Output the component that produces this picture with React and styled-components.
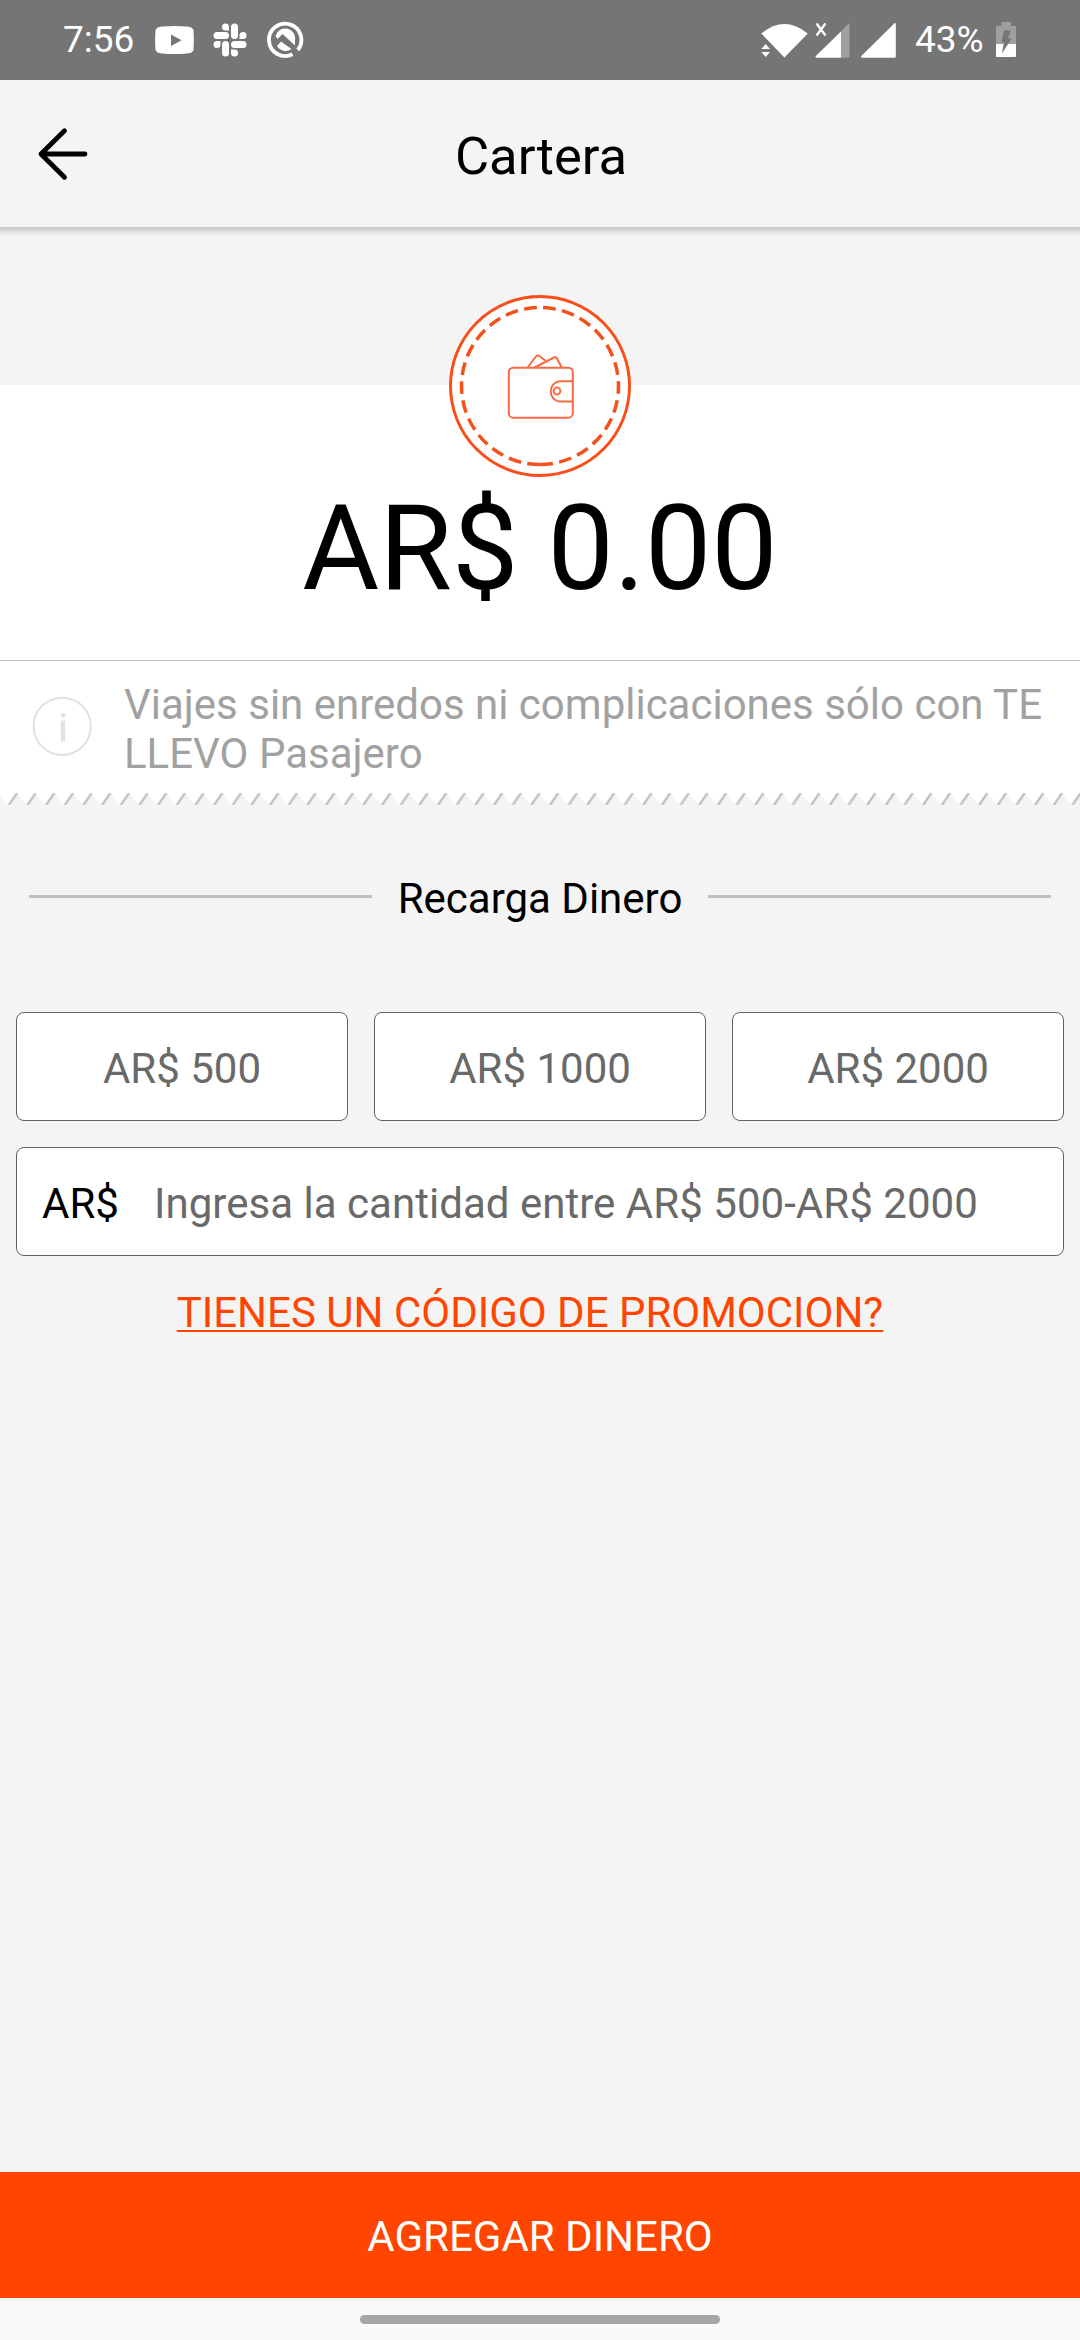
import React from 'react';
import styled, {createGlobalStyle} from 'styled-components';

const accentColor = '#ff4500';
const greyBackground = '#f4f4f4';
const lineColor = '#bfbfbf';

const GlobalStyle = createGlobalStyle`
    * {
        box-sizing: border-box;
    }
    body {
        margin: 0;
        font-family: Roboto, "Liberation Sans", sans-serif;
        font-size: 42px;
        line-height: 49px;
    }
`;

const Screen = styled.div`
    display: flex;
    flex-direction: column;
    width: 1080px;
    height: 2340px;
    overflow: hidden;
    background-color: ${greyBackground};
`;

const StatusBar = styled.div`
    display: flex;
    align-items: center;
    justify-content: space-between;
    height: 80px;
    padding: 0 64px 0 63px;
    background-color: #757575;
    color: #fff;
    font-size: 37px;
    line-height: 44px;
    svg {
        display: block;
    }
`;

const StatusGroup = styled.div`
    display: flex;
    align-items: center;
`;

const StatusText = styled.span`
    width: ${({$width}) => $width}px;
    margin: 0 ${({$right}) => $right}px 0 ${({$left}) => $left || 0}px;
    white-space: nowrap;
`;

const Header = styled.header`
    display: grid;
    grid-template-columns: 140px 1fr 140px;
    align-items: center;
    height: 147px;
    flex-shrink: 0;
    h1 {
        margin: 4px 0 0 2px;
        text-align: center;
        font-size: 52.500px;
        font-weight: 400;
        line-height: 62px;
    }
`;

const HeaderShadow = styled.div`
    height: 9px;
    flex-shrink: 0;
    background: linear-gradient(#c6c6c6, #d6d6d6 35%, #e8e8e8 65%, ${greyBackground});
`;

const BackButton = styled.button`
    display: flex;
    width: 60px;
    height: 60px;
    margin-left: 34px;
    padding: 0;
    border: 0;
    background: none;
`;

const Balance = styled.section`
    display: flex;
    flex-direction: column;
    align-items: center;
    height: 276px;
    margin-top: 149px;
    border-bottom: 1px solid ${lineColor};
    background-color: #fff;
    svg {
        display: block;
        margin-top: -91px;
        flex-shrink: 0;
    }
`;

const Amount = styled.div`
    margin-top: 2px;
    font-size: 118px;
    line-height: 138px;
    white-space: nowrap;
`;

const Info = styled.section`
    display: flex;
    height: 132px;
    padding: 19px 0 0 32px;
    background-color: #fff;
    color: #a1a1a1;
    svg {
        margin: 16px 32px 0 0;
        flex-shrink: 0;
    }
    p {
        margin: 0;
        white-space: nowrap;
    }
`;

const TornEdge = styled.svg`
    display: block;
    flex-shrink: 0;
`;

const SectionTitle = styled.div`
    display: flex;
    align-items: center;
    gap: 26px;
    margin: 69px 29px 0;
    &::before, &::after {
        content: '';
        flex: 1;
        height: 3px;
        margin-bottom: 4px;
        background-color: ${lineColor};
    }
    h2 {
        margin: 0;
        font-size: 42px;
        font-weight: 400;
    }
`;

const Form = styled.div`
    display: flex;
    flex-direction: column;
    flex: 1;
    align-items: center;
    padding: 89px 16px 0;
`;

const Options = styled.div`
    display: grid;
    grid-template-columns: repeat(3, 1fr);
    gap: 26px;
    width: 100%;
`;

const Option = styled.button`
    height: 109px;
    padding: 4px 0 0;
    border: 1px solid #626262;
    border-radius: 8px;
    background-color: #fff;
    color: #696969;
    font: inherit;
`;

const AmountField = styled.div`
    display: flex;
    align-items: center;
    width: 100%;
    height: 109px;
    margin-top: 26px;
    padding: 3px 25px 0;
    border: 1px solid #626262;
    border-radius: 8px;
    background-color: #fff;
    white-space: nowrap;
`;

const Currency = styled.span`
    width: 112px;
`;

const Hint = styled.span`
    color: #696969;
    letter-spacing: .03px;
`;

const PromoLink = styled.a`
    margin: 32px 20px 0 0;
    color: ${accentColor};
    text-decoration: underline;
    text-decoration-thickness: 2px;
    text-decoration-skip-ink: none;
    text-underline-offset: 3px;
    white-space: nowrap;
`;

const AddButton = styled.button`
    height: 126px;
    flex-shrink: 0;
    padding: 3px 0 0;
    border: 0;
    background-color: ${accentColor};
    color: #fff;
    font: inherit;
`;

const NavBar = styled.div`
    display: flex;
    justify-content: center;
    height: 42px;
    flex-shrink: 0;
    padding-top: 17px;
    background-color: #fafafa;
    &::after {
        content: '';
        width: 360px;
        height: 9px;
        border-radius: 5px;
        background-color: #a6a6a6;
    }
`;


const NotificationIcons = () => (
    <svg width="150" height="40" viewBox="154 20 150 40" fill="#fff">
        <path d="M162 26.5q12.500-1 25 0q6 .5 6.500 4q.7 9.500 0 19q-.5 3.500-6.500 4q-12.500 1-25 0q-6-.5-6.500-4q-.9-9.500 0-19q.5-3.500 6.500-4z" />
        <path d="M171 34.500v11.500l10.500-5.700z" fill="#757575" />
        {/* slack */}
        <rect x="231" y="23.500" width="7" height="15.500" rx="3.500" />
        <rect x="213.500" y="32" width="15.500" height="7" rx="3.500" />
        <rect x="222" y="41" width="7" height="15.500" rx="3.500" />
        <rect x="231" y="41" width="15.500" height="7" rx="3.500" />
        <path d="M229 30.500h-3.500a3.500 3.500 0 1 1 3.500-3.500z" />
        <path d="M239.500 39v-3.500a3.500 3.500 0 1 1 3.500 3.500z" />
        <path d="M220.500 41v3.500a3.500 3.500 0 1 1-3.500-3.500z" />
        <path d="M231 49.500h3.500a3.500 3.500 0 1 1-3.500 3.500z" />
        {/* android 10 */}
        <path d="M292.500 54.300A16.200 16.200 0 1 1 297.800 50" fill="none" stroke="#fff" strokeWidth="3.800" />
        <path d="M275.500 36a10 10 0 0 1 19.500 5v4.500l-12.500-11.500-5 5z" />
        <path d="M277 46l4-4.500 10.500 7.500a10 10 0 0 1-14.500-3z" />
    </svg>
);

const SignalIcons = () => (
    <svg width="136" height="40" viewBox="760 20 136 40" fill="#fff">
        <path d="M760.300 33.500q23-19 46.500 0l-23.400 24z" />
        <path d="M760.300 49l4.400-5 4.300 5zM760.300 52l4.400 5 4.300-5z" />
        <path d="M815.500 23.500l9 12M824.500 23.500l-9 12" fill="none" stroke="#fff" strokeWidth="2.300" />
        <path d="M840 31.500l7.500-8q1-.5 1 .5v32.500q0 1.300-1.300 1.300h-7.200z" fill="#9f9f9f" />
        <path d="M840 31.500v26.300h-24.500q-2-.5-.7-1.800z" />
        <path d="M894.800 24v32.500q0 1.300-1.300 1.300h-32.500q-2-.5-.7-1.800l33-32.500q1.500-1 1.500.5z" />
    </svg>
);

const BatteryIcon = () => (
    <svg width="20" height="36" viewBox="995 22 20 36">
        <path d="M1000.500 22h9.500v4h5v18h-20v-18h5.500z" fill="#9f9f9f" />
        <path d="M995 44h20v12q0 1-1 1h-18q-1 0-1-1z" fill="#fff" />
        <path d="M1003 30.500h6.500l-2.500 8h3.500l-9.500 15 2-11.500h-2.500z" fill="#757575" />
    </svg>
);

const BackIcon = () => (
    <svg width="60" height="60" fill="none" stroke="#000" strokeWidth="4.800" strokeLinecap="round" strokeLinejoin="round">
        <path d="M30.500 6.700L7 30l23.500 23.300M7 30h44" />
    </svg>
);

const WalletIcon = () => (
    <svg width="184" height="184" viewBox="-92 -92 184 184" fill="none" stroke={accentColor}>
        <circle r="89.500" fill="#fff" stroke="#fa4f1a" strokeWidth="3" />
        <circle r="78.500" stroke="#f5501a" strokeWidth="3.500" strokeDasharray="12.75 6.430" transform="rotate(90)" />
        <g stroke="#f96a42" strokeWidth="2">
            <rect x="-31.200" y="-18.300" width="64" height="50" rx="4.500" />
            <path d="M-12.500-18.500l8.500-11q1.500-2 3.300-.5l6 4.500M-5.500-18.500l19.500-10q2-1 2.700.5l5 9.500" />
            <path d="M32.800-4.700h-13.500a10 10.200 0 0 0 0 20.200h13.500" />
            <circle cx="17" cy="5" r="3.400" />
        </g>
    </svg>
);

const InfoIcon = () => (
    <svg width="60" height="60" fill="none" stroke="#e2e2e2">
        <circle cx="30.200" cy="30.300" r="28.600" strokeWidth="2" />
        <path d="M31 24.500v21" strokeWidth="4.500" />
        <circle cx="31.200" cy="19.300" r="2.400" fill="#e2e2e2" stroke="none" />
    </svg>
);

const Edge = () => (
    <TornEdge width="1080" height="12">
        <defs>
            <pattern id="tooth" x="7.800" width="18.660" height="12" patternUnits="userSpaceOnUse">
                <rect width="18.660" height="12" fill="#fff" />
                <path d="M0 12l9-12 9.660 12z" fill={greyBackground} />
                <path d="M1 12l8.300-12" stroke="#c2c2c2" strokeWidth="2.400" />
            </pattern>
        </defs>
        <rect width="1080" height="12" fill="url(#tooth)" />
    </TornEdge>
);


const App = () => {
    const options = ['AR$ 500', 'AR$ 1000', 'AR$ 2000'];

    return (
        <Screen>
            <GlobalStyle />
            <StatusBar>
                <StatusGroup>
                    <StatusText $width={72} $right={19}>7:56</StatusText>
                    <NotificationIcons />
                </StatusGroup>
                <StatusGroup>
                    <SignalIcons />
                    <StatusText $width={68} $right={13} $left={18}>43%</StatusText>
                    <BatteryIcon />
                </StatusGroup>
            </StatusBar>
            <Header>
                <BackButton aria-label="Volver"><BackIcon /></BackButton>
                <h1>Cartera</h1>
            </Header>
            <HeaderShadow />
            <Balance>
                <WalletIcon />
                <Amount>AR$ 0.00</Amount>
            </Balance>
            <Info>
                <InfoIcon />
                <p>Viajes sin enredos ni complicaciones sólo con TE<br />LLEVO Pasajero</p>
            </Info>
            <Edge />
            <SectionTitle>
                <h2>Recarga Dinero</h2>
            </SectionTitle>
            <Form>
                <Options>
                    {options.map(option => <Option key={option}>{option}</Option>)}
                </Options>
                <AmountField>
                    <Currency>AR$</Currency>
                    <Hint>Ingresa la cantidad entre AR$ 500-AR$ 2000</Hint>
                </AmountField>
                <PromoLink>TIENES UN CÓDIGO DE PROMOCION?</PromoLink>
            </Form>
            <AddButton>AGREGAR DINERO</AddButton>
            <NavBar />
        </Screen>
    )
}

export default App;
